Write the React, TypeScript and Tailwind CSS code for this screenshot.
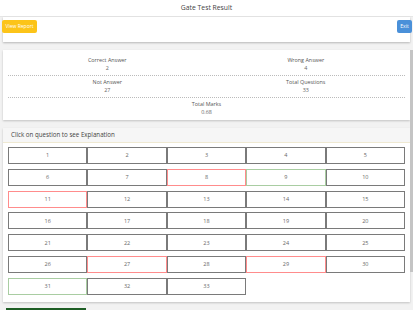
import React from 'react';

const red = [8, 11, 27, 29];
const green = [9, 31];

const Stat: React.FC<{ label: string; value: string }> = ({ label, value }) => (
  <div className="flex flex-col items-center leading-[8px]">
    <span className="text-[#555]">{label}</span>
    <span className="text-[#666]">{value}</span>
  </div>
);

const App: React.FC = () => {
  const questions = Array.from({ length: 33 }, (_, i) => i + 1);

  return (
    <div className="relative w-[413px] h-[310px] overflow-hidden bg-[#f2f2f2]" style={{ fontFamily: '"Open Sans", "Liberation Sans", sans-serif' }}>
      {/* Title bar */}
      <div className="h-[17px] bg-white border-b border-[#e6e6e6] flex items-center justify-center text-[6.8px] text-[#444]">
        Gate Test Result
      </div>

      {/* Action card */}
      <div className="mx-[3px] h-[25px] bg-white shadow-[0_1px_2px_rgba(0,0,0,0.25)]">
        <div className="flex justify-between -ml-px -mr-[2px] pt-[3px]">
          <button className="h-[13px] w-[35px] rounded-[2px] bg-[#fcc419] text-white text-[5px] leading-[13px]">View Report</button>
          <button className="h-[13px] w-[15px] rounded-[2px] bg-[#4a90d9] text-white text-[5px] leading-[13px]">Exit</button>
        </div>
      </div>

      {/* Stats card */}
      <div className="mx-[3px] mt-[8px] h-[70px] bg-white shadow-[0_1px_2px_rgba(0,0,0,0.2)] px-[5px] text-[5.4px]">
        <div className="grid grid-cols-2 pt-[6px] pb-[3px] border-b border-dotted border-[#bbb]">
          <Stat label="Correct Answer" value="2" />
          <Stat label="Wrong Answer" value="4" />
        </div>
        <div className="grid grid-cols-2 pt-[2px] pb-[3px] border-b border-dotted border-[#bbb]">
          <Stat label="Not Answer" value="27" />
          <Stat label="Total Questions" value="33" />
        </div>
        <div className="pt-[2px]">
          <Stat label="Total Marks" value="0.68" />
        </div>
      </div>

      {/* Question grid card */}
      <div className="mx-[3px] mt-[8px] bg-white shadow-[0_1px_2px_rgba(0,0,0,0.2)]">
        <div className="h-[15px] bg-[#f6f6f6] border-b border-[#efe9d2] pl-[8px] flex items-center text-[6.2px] text-[#444]">
          Click on question to see Explanation
        </div>
        <div className="grid grid-cols-5 gap-y-[4.8px] px-[5px] pt-[4px] pb-[7px]">
          {questions.map((q) => {
            const border = red.includes(q)
              ? 'border-[#ff8c8c]'
              : green.includes(q)
              ? 'border-[#a9cda2]'
              : 'border-[#7a7a7a]';
            return (
              <div
                key={q}
                className={`h-[17px] border ${border} flex items-center justify-center text-[5.5px] text-[#666]`}
              >
                {q}
              </div>
            );
          })}
        </div>
      </div>

      <div className="mt-[6px] ml-[6px] w-[80px] h-[4px] bg-[#1e5e25]" />

      {/* Overlay scrollbar */}
      <div className="absolute right-0 top-[50px] w-[3px] h-[222px] bg-[#c4c4c4]" />
    </div>
  );
};

export default App;
